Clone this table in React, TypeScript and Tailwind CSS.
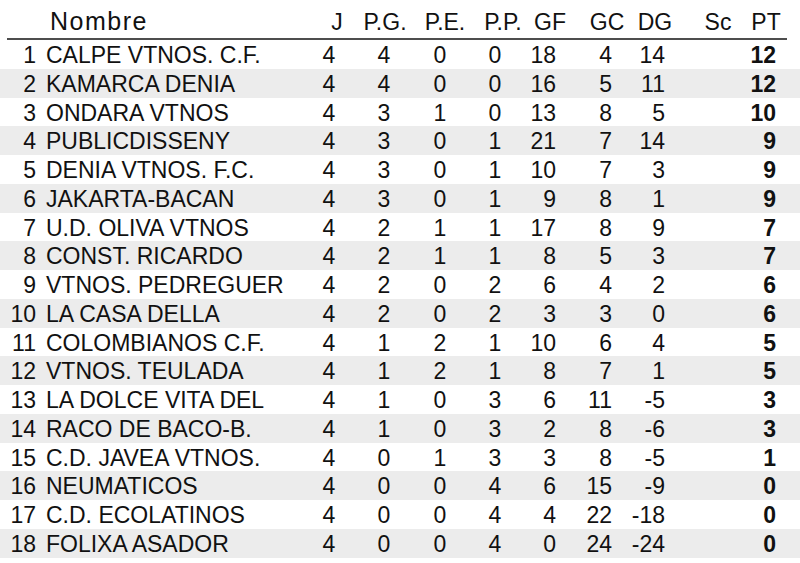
import React from 'react';

type Row = [number, string, number, number, number, number, number, number, number, number];

const rows: Row[] = [
  [1, 'CALPE VTNOS. C.F.', 4, 4, 0, 0, 18, 4, 14, 12],
  [2, 'KAMARCA DENIA', 4, 4, 0, 0, 16, 5, 11, 12],
  [3, 'ONDARA VTNOS', 4, 3, 1, 0, 13, 8, 5, 10],
  [4, 'PUBLICDISSENY', 4, 3, 0, 1, 21, 7, 14, 9],
  [5, 'DENIA VTNOS. F.C.', 4, 3, 0, 1, 10, 7, 3, 9],
  [6, 'JAKARTA-BACAN', 4, 3, 0, 1, 9, 8, 1, 9],
  [7, 'U.D. OLIVA VTNOS', 4, 2, 1, 1, 17, 8, 9, 7],
  [8, 'CONST. RICARDO', 4, 2, 1, 1, 8, 5, 3, 7],
  [9, 'VTNOS. PEDREGUER', 4, 2, 0, 2, 6, 4, 2, 6],
  [10, 'LA CASA DELLA', 4, 2, 0, 2, 3, 3, 0, 6],
  [11, 'COLOMBIANOS C.F.', 4, 1, 2, 1, 10, 6, 4, 5],
  [12, 'VTNOS. TEULADA', 4, 1, 2, 1, 8, 7, 1, 5],
  [13, 'LA DOLCE VITA DEL', 4, 1, 0, 3, 6, 11, -5, 3],
  [14, 'RACO DE BACO-B.', 4, 1, 0, 3, 2, 8, -6, 3],
  [15, 'C.D. JAVEA VTNOS.', 4, 0, 1, 3, 3, 8, -5, 1],
  [16, 'NEUMATICOS', 4, 0, 0, 4, 6, 15, -9, 0],
  [17, 'C.D. ECOLATINOS', 4, 0, 0, 4, 4, 22, -18, 0],
  [18, 'FOLIXA ASADOR', 4, 0, 0, 4, 0, 24, -24, 0],
];

export default function App() {
  return (
    <div
      className="w-[800px] h-[563px] overflow-hidden bg-white text-[#111]"
      style={{ fontFamily: '"Liberation Sans", Arial, sans-serif' }}
    >
      {/* Header */}
      <div className="flex h-[38px] pt-[9px] text-[23px] leading-[26px]">
        <div className="w-[314px] pl-[50px] text-[25px] leading-[24px] tracking-[1.5px]">Nombre</div>
        <div className="w-[46px] flex justify-center">J</div>
        <div className="w-[46px] ml-[2px] flex justify-center">P.G.</div>
        <div className="w-[46px] ml-[14px] flex justify-center">P.E.</div>
        <div className="w-[46px] ml-[12px] flex justify-center">P.P.</div>
        <div className="w-[46px] ml-[1px] flex justify-center">GF</div>
        <div className="w-[46px] ml-[11px] flex justify-center">GC</div>
        <div className="w-[46px] ml-[2px] flex justify-center">DG</div>
        <div className="w-[46px] ml-[17px] flex justify-center">Sc</div>
        <div className="w-[46px] ml-[2px] flex justify-center">PT</div>
      </div>
      <div className="h-[2px] ml-[7px] w-[780px] bg-[#4d4d4d]" />

      {/* Rows */}
      <div className="text-[23px]">
        {rows.map(([pos, name, j, pg, pe, pp, gf, gc, dg, pt]) => (
          <div
            key={pos}
            className={`flex h-[28.75px] pt-[3px] leading-[25.75px] ${pos % 2 === 0 ? 'bg-[#ececec]' : ''}`}
          >
            <div className="w-[36px] text-right">{pos}</div>
            <div className="w-[270px] pl-[10px] whitespace-nowrap">{name}</div>
            <div className="w-[46px] text-center">{j}</div>
            <div className="w-[64px] text-center">{pg}</div>
            <div className="w-[48px] text-center">{pe}</div>
            <div className="w-[62px] text-center">{pp}</div>
            <div className="w-[30px] text-right">{gf}</div>
            <div className="w-[56px] text-right">{gc}</div>
            <div className="w-[53px] text-right">{dg}</div>
            <div className="w-[75px]" />
            <div className="w-[36px] text-right font-bold">{pt}</div>
          </div>
        ))}
      </div>
    </div>
  );
}
